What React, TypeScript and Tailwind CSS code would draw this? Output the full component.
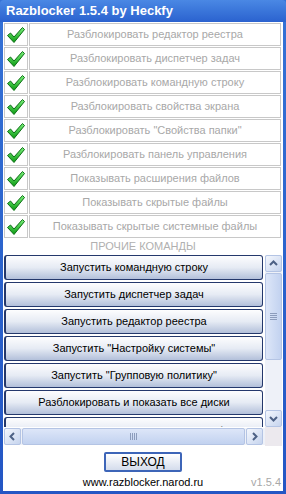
import React from "react";

const toggles = [
  "Разблокировать редактор реестра",
  "Разблокировать диспетчер задач",
  "Разблокировать командную строку",
  "Разблокировать свойства экрана",
  "Разблокировать \"Свойства папки\"",
  "Разблокировать панель управления",
  "Показывать расширения файлов",
  "Показывать скрытые файлы",
  "Показывать скрытые системные файлы",
];

const commands = [
  "Запустить командную строку",
  "Запустить диспетчер задач",
  "Запустить редактор реестра",
  "Запустить \"Настройку системы\"",
  "Запустить \"Групповую политику\"",
  "Разблокировать и показать все диски",
  "Восстановить стандартные ассоциации файлов",
];

function Check() {
  return (
    <svg width="20" height="18" viewBox="0 0 20 18">
      <defs>
        <linearGradient id="g" x1="0" y1="0" x2="0" y2="1">
          <stop offset="0" stopColor="#7cf27c" />
          <stop offset="1" stopColor="#0a9a12" />
        </linearGradient>
      </defs>
      <path
        d="M1.5 9.5 L4.5 7 L8 11 L16.5 1.5 L18.5 3.5 L8 16.5 Z"
        fill="url(#g)"
        stroke="#0b6e14"
        strokeWidth="1"
        strokeLinejoin="round"
      />
    </svg>
  );
}

function Chevron({ dir }: { dir: "up" | "down" | "left" | "right" }) {
  const d = {
    up: "M2 7 L5.5 3.5 L9 7",
    down: "M2 4 L5.5 7.5 L9 4",
    left: "M7 2 L3.5 5.5 L7 9",
    right: "M4 2 L7.5 5.5 L4 9",
  }[dir];
  return (
    <svg width="11" height="11" viewBox="0 0 11 11">
      <path d={d} fill="none" stroke="#4d6185" strokeWidth="2" />
    </svg>
  );
}

function ScrollBtn({ dir }: { dir: "up" | "down" | "left" | "right" }) {
  return (
    <div className="flex h-[17px] w-[17px] items-center justify-center rounded-[2px] border border-[#b4c4e4] bg-gradient-to-br from-[#f4f7fd] to-[#c6d4ee]">
      <Chevron dir={dir} />
    </div>
  );
}

export default function App() {
  return (
    <div
      className="flex h-[494px] w-[286px] flex-col bg-gradient-to-b from-[#3572d6] to-[#2456c4] text-[11px]"
      style={{ fontFamily: '"Liberation Sans", Arial, sans-serif' }}
    >
      <div className="flex h-[22px] shrink-0 items-center rounded-t-[4px] bg-gradient-to-b from-[#4a88e4] to-[#2b62cf] pl-[6px] text-[13px] font-bold text-white">
        Razblocker 1.5.4 by Heckfy
      </div>
      <div className="mx-[3px] mb-[3px] flex flex-1 flex-col bg-white">
        <div className="flex flex-col gap-[1px] px-[1px] pt-[1px]">
          {toggles.map((t) => (
            <div key={t} className="flex h-[23px] gap-[1px] pr-[1px]">
              <div className="flex w-[24px] items-center justify-center border border-[#c8c8c8]">
                <Check />
              </div>
              <div className="flex flex-1 items-center justify-center border border-[#c8c8c8] text-[#a8a8a8]">
                {t}
              </div>
            </div>
          ))}
        </div>
        <div className="flex h-[16px] items-end justify-center text-[#b0b0b0]">ПРОЧИЕ КОМАНДЫ</div>
        <div className="mt-[1px] flex h-[172px] px-[1px]">
          <div className="flex flex-1 flex-col gap-[2px] overflow-hidden pr-[2px]">
            {commands.map((c, i) => (
              <div
                key={c}
                className={`flex h-[25px] shrink-0 justify-center rounded-[3px] border border-l-2 border-[#24386c] bg-gradient-to-b from-[#fdfdfe] via-[#e6ebf4] to-[#b3c0da] text-black ${
                  i === commands.length - 1 ? "items-end pb-[2px]" : "items-center"
                }`}
              >
                {c}
              </div>
            ))}
          </div>
          <div className="flex w-[17px] flex-col bg-[#eef1f8]">
            <ScrollBtn dir="up" />
            <div className="mt-[1px] flex h-[87px] items-center justify-center rounded-[2px] border border-[#b4c4e4] bg-gradient-to-r from-[#dde6f8] to-[#c2d2f0]">
              <div className="flex flex-col gap-[1px]">
                <div className="h-[1px] w-[7px] bg-[#8c9cbc]" />
                <div className="h-[1px] w-[7px] bg-[#8c9cbc]" />
                <div className="h-[1px] w-[7px] bg-[#8c9cbc]" />
                <div className="h-[1px] w-[7px] bg-[#8c9cbc]" />
              </div>
            </div>
            <div className="flex-1" />
            <ScrollBtn dir="down" />
          </div>
        </div>
        <div className="flex h-[19px] items-center px-[1px]">
          <div className="flex flex-1 items-center gap-[1px] bg-[#eef1f8] pr-[2px]">
            <ScrollBtn dir="left" />
            <div className="flex h-[17px] flex-1 items-center justify-center rounded-[2px] border border-[#b4c4e4] bg-gradient-to-b from-[#dde6f8] to-[#c2d2f0]">
              <div className="flex gap-[1px]">
                <div className="h-[7px] w-[1px] bg-[#8c9cbc]" />
                <div className="h-[7px] w-[1px] bg-[#8c9cbc]" />
                <div className="h-[7px] w-[1px] bg-[#8c9cbc]" />
                <div className="h-[7px] w-[1px] bg-[#8c9cbc]" />
              </div>
            </div>
            <ScrollBtn dir="right" />
          </div>
          <div className="h-[19px] w-[17px] bg-[#ece9ee]" />
        </div>
        <div className="flex flex-1 flex-col items-center pt-[6px]">
          <div className="flex h-[20px] w-[78px] items-center justify-center rounded-[2px] border-2 border-[#3d65b8] bg-gradient-to-b from-[#ffffff] to-[#d4dcec] text-[12px] text-black">
            ВЫХОД
          </div>
          <div className="relative mt-[2px] flex w-full justify-center text-black">
            www.razblocker.narod.ru
            <span className="absolute right-[2px] text-[#a8a8a8]">v1.5.4</span>
          </div>
        </div>
      </div>
    </div>
  );
}
